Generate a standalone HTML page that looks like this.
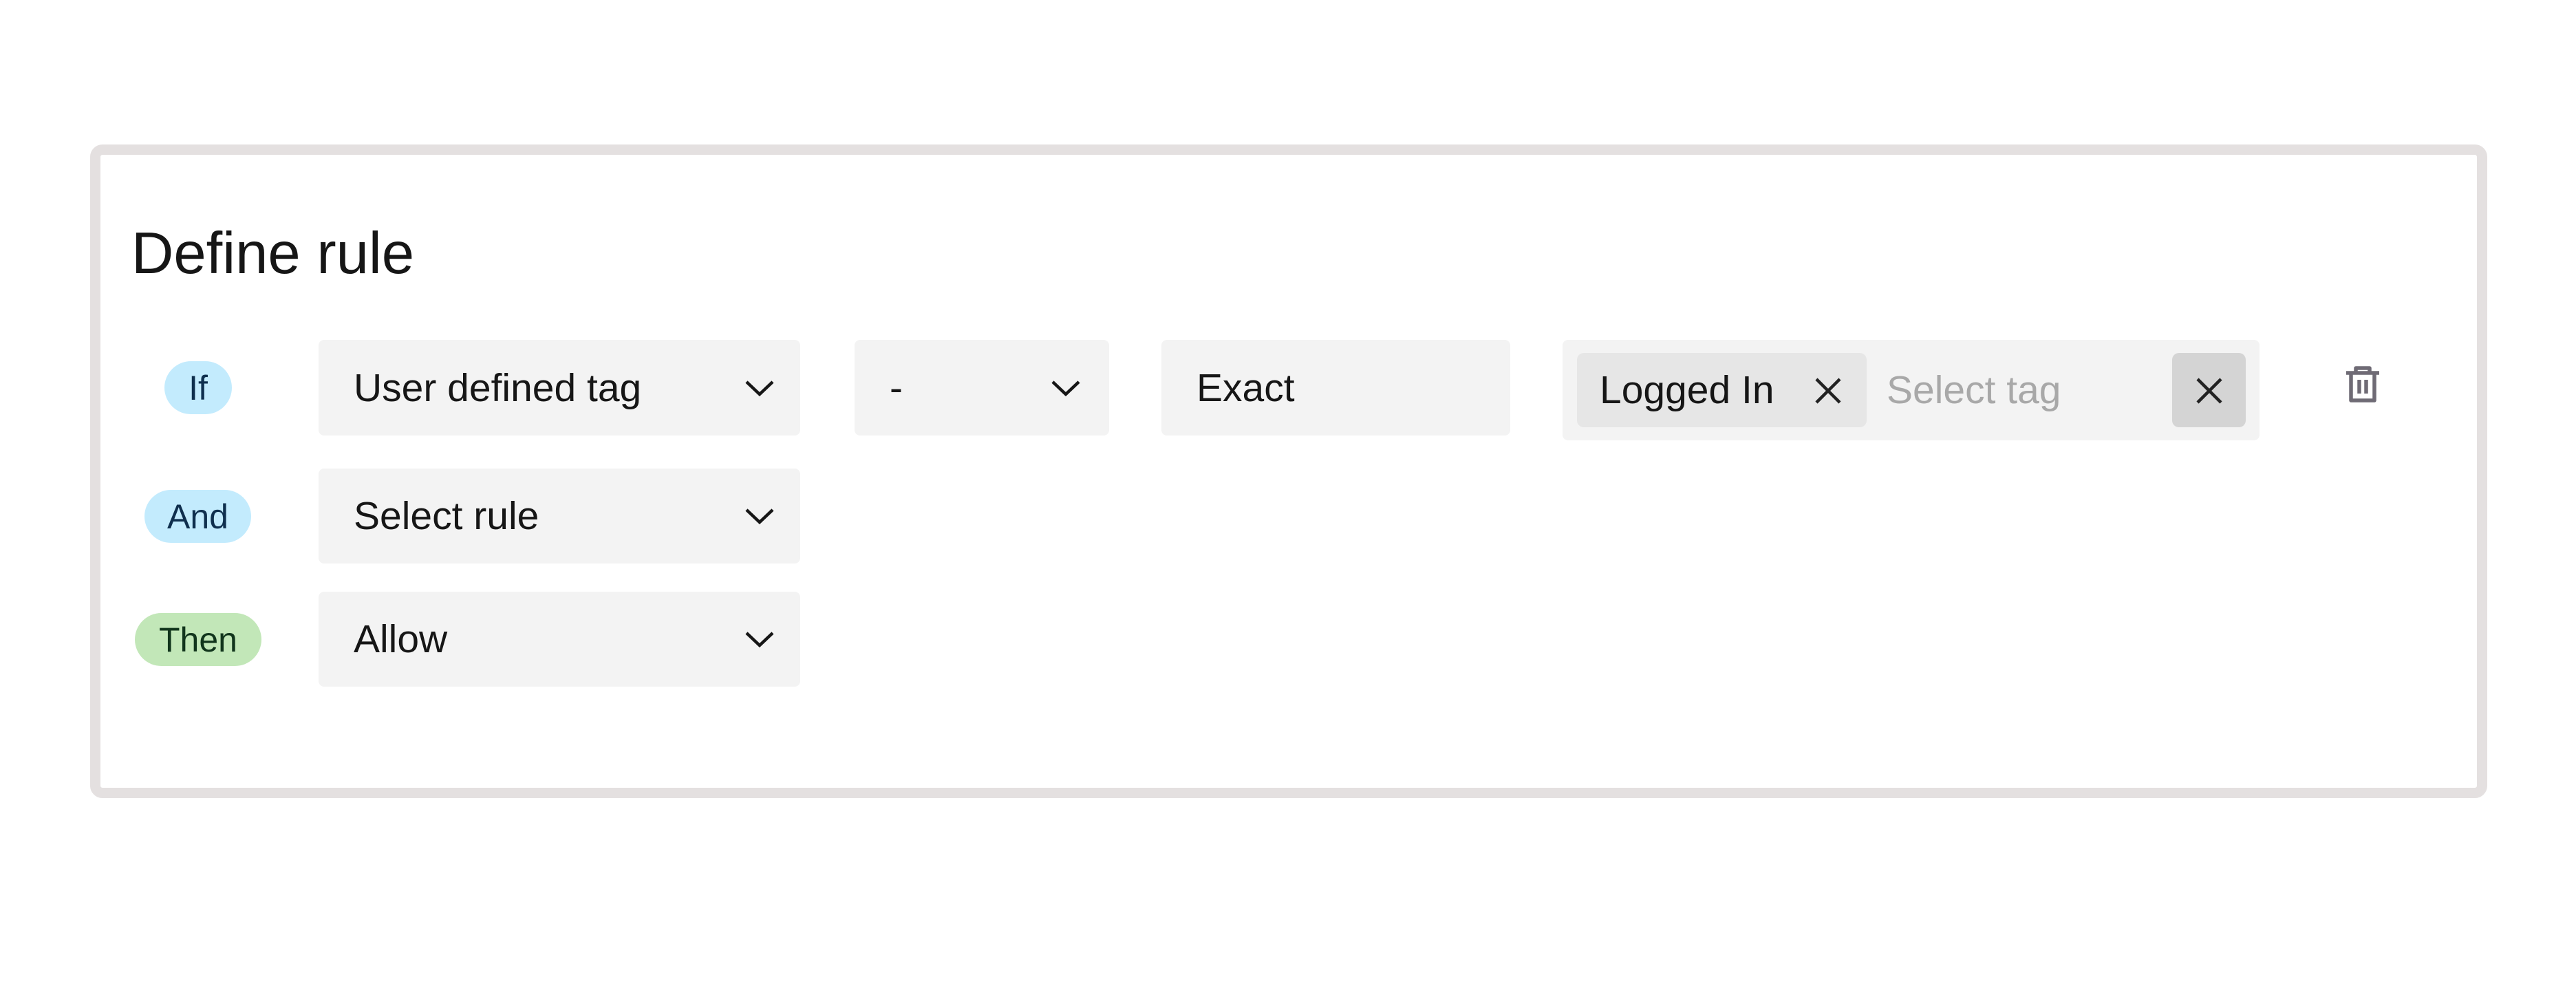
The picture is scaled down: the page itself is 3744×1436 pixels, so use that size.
<!DOCTYPE html>
<html><head><meta charset="utf-8"><style>
html,body{margin:0;padding:0;background:#fff;width:3744px;height:1436px;overflow:hidden;font-family:"Liberation Sans",sans-serif;color:#161616}
.card{position:absolute;left:131px;top:210px;width:3484px;height:950px;box-sizing:border-box;border:15px solid #e4e0e0;border-radius:18px;background:#fff}
.abs{position:absolute}
.title{left:191px;top:314px;font-size:85px;line-height:110px}
.box{position:absolute;background:#f3f3f3;border-radius:8px;font-size:57px;display:flex;align-items:center;box-sizing:border-box;padding-left:51px}
.chev{position:absolute;width:42px;height:24px}
.pill{position:absolute;border-radius:40px;font-size:50px;display:flex;align-items:center;justify-content:center}
.blue{background:#c3ebfd;color:#0f2f4e}
.green{background:#c2e7b8;color:#11351c}
</style></head><body>
<div class="card"></div>
<div class="abs title">Define rule</div>

<div class="pill blue" style="left:239px;top:525px;width:98px;height:77px">If</div>
<div class="pill blue" style="left:210px;top:712px;width:155px;height:77px">And</div>
<div class="pill green" style="left:196px;top:891px;width:184px;height:77px">Then</div>

<div class="box" style="left:463px;top:494px;width:700px;height:139px">User defined tag
<svg class="chev" style="left:620px;top:58px" viewBox="0 0 42 24"><path d="M2 3 L21 21 L40 3" fill="none" stroke="#161616" stroke-width="4.5"/></svg></div>
<div class="box" style="left:1242px;top:494px;width:370px;height:139px">-
<svg class="chev" style="left:286px;top:58px" viewBox="0 0 42 24"><path d="M2 3 L21 21 L40 3" fill="none" stroke="#161616" stroke-width="4.5"/></svg></div>
<div class="box" style="left:1688px;top:494px;width:507px;height:139px">Exact</div>

<div class="box" style="left:2271px;top:494px;width:1013px;height:146px;padding:0"></div>
<div class="box" style="left:2292px;top:513px;width:421px;height:108px;background:#e6e6e6;padding-left:33px;border-radius:10px">Logged In
<svg class="abs" style="left:345px;top:35px" width="40" height="40" viewBox="0 0 40 40"><path d="M3 3L37 37M37 3L3 37" stroke="#222" stroke-width="4.5"/></svg></div>
<div class="abs" style="left:2742px;top:530px;font-size:57px;color:#a8a8a8;line-height:75px">Select tag</div>
<div class="abs" style="left:3157px;top:513px;width:107px;height:108px;background:#d4d4d4;border-radius:10px">
<svg class="abs" style="left:34px;top:35px" width="40" height="40" viewBox="0 0 40 40"><path d="M3 3L37 37M37 3L3 37" stroke="#222" stroke-width="4.5"/></svg></div>

<svg class="abs" style="left:3408px;top:530px" width="52" height="56" viewBox="0 0 52 56">
<path d="M2 12H50M16 12V5H36V12M9 12V52H43V12M21 22V42M31 22V42" fill="none" stroke="#6f6b75" stroke-width="5.5" stroke-linejoin="round"/></svg>

<div class="box" style="left:463px;top:681px;width:700px;height:138px">Select rule
<svg class="chev" style="left:620px;top:57px" viewBox="0 0 42 24"><path d="M2 3 L21 21 L40 3" fill="none" stroke="#161616" stroke-width="4.5"/></svg></div>
<div class="box" style="left:463px;top:860px;width:700px;height:138px">Allow
<svg class="chev" style="left:620px;top:57px" viewBox="0 0 42 24"><path d="M2 3 L21 21 L40 3" fill="none" stroke="#161616" stroke-width="4.5"/></svg></div>
</body></html>
